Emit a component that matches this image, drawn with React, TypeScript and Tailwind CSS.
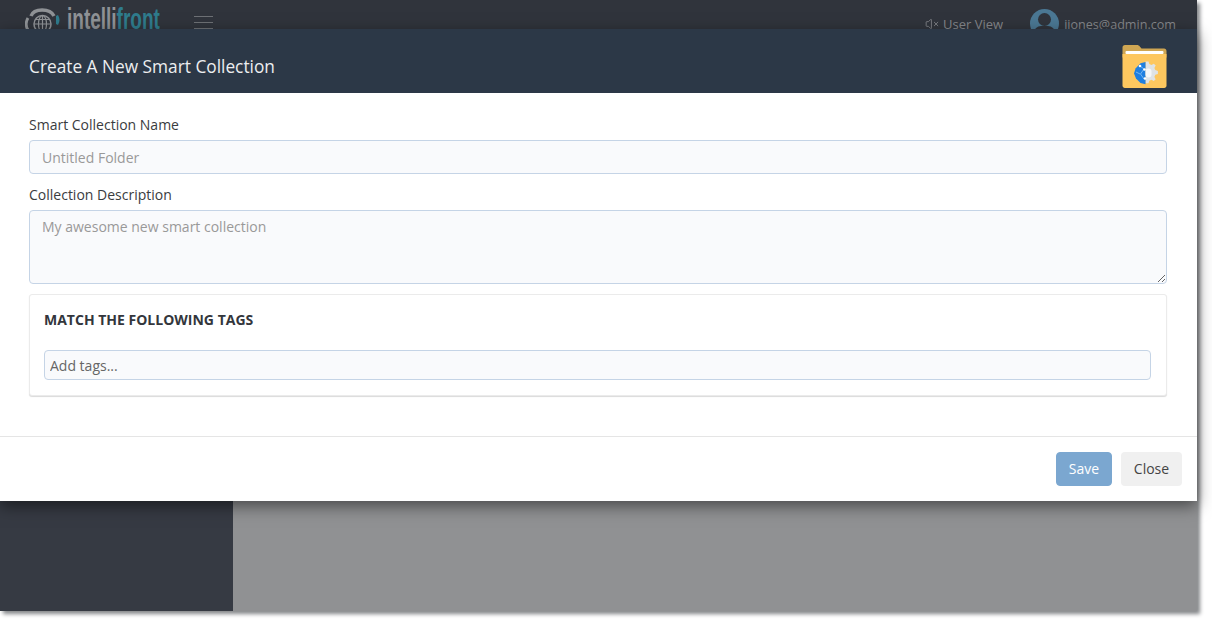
import { VolumeX } from 'lucide-react';

function FolderIcon() {
  return (
    <svg width="45" height="43" viewBox="1 0.500 44 43" aria-hidden="true">
      <path d="M1 3C1 1.500 2 .5 3.500 .5h12c1.200 0 2 .5 2.800 1.500L20 4h22.500C44 4 45 5 45 6.500V13H1z" fill="#cfa653" />
      <path d="M1 9.500h44V41c0 1.400-1 2.400-2.400 2.400H3.400C2 43.400 1 42.400 1 41z" fill="#fdc75f" />
      <rect x="4" y="6.500" width="38" height="3" rx="1" fill="#fff" />
      <path
        d="M24 17h3l.8 2.600 2.200.9 2.300-1.300 1.900 1.900-1.300 2.300.9 2.200 2.600.8v3l-2.600.8-.9 2.200 1.300 2.300-1.900 1.900-2.300-1.300-2.200.9-.8 2.600h-3z"
        fill="#dfe3e6"
      />
      <path d="M24 17.500l-5 1.200-5 5.300-1.500 5 2 5 4.500 4.500 5 1.300z" fill="#1f7fe0" />
      <path d="M18.500 21.500l4 3-3.500 5 3.500 5M14.500 27.500l4 2" stroke="#8cc4f7" strokeWidth="0.8" fill="none" />
      <circle cx="18.500" cy="21.500" r="1.300" fill="#fff" />
      <circle cx="23" cy="25" r="1.300" fill="#fff" />
      <circle cx="23.500" cy="34" r="1.300" fill="#fff" />
      <rect x="24" y="24" width="6" height="9" rx="3" fill="#f6f7f8" />
    </svg>
  );
}

function LogoMark() {
  return (
    <svg width="37" height="32" viewBox="0 0 37 32" aria-hidden="true" className="shrink-0">
      <path d="M6 12C9 4 25 4 29 12" stroke="#8f9296" strokeWidth="3.500" fill="none" />
      <path d="M3 26c-2.500-4-2-9 0-12" stroke="#8f9296" strokeWidth="3" fill="none" />
      <circle cx="17.500" cy="20" r="8.500" stroke="#8f9296" strokeWidth="1.500" fill="none" />
      <ellipse cx="17.500" cy="20" rx="4" ry="8.500" stroke="#8f9296" strokeWidth="1.200" fill="none" />
      <path d="M9 20h17M10.500 15.500h14M17.500 11.500v17" stroke="#8f9296" strokeWidth="1.200" />
      <path d="M33 11c2 3 2 7 0 10l-2-1v-8z" fill="#2f7c8d" />
    </svg>
  );
}

export default function App() {
  return (
    <div className="h-[626px] w-[1212px] overflow-hidden bg-white font-['Open_Sans',sans-serif] text-sm text-[#3a3c40]">
      <div className="relative flex h-[611px] w-[1197px] flex-col bg-[#909193] shadow-[3px_3px_4px_#85878a]">
        <header className="flex h-[29px] shrink-0 items-start justify-between overflow-hidden bg-[#30343c] pl-[25px] pr-[21px] pt-[4px]">
          <div className="flex items-start">
            <LogoMark />
            <div className="ml-[5px] mt-[-5px] w-[93px]">
              <span className="inline-block origin-left scale-x-[0.655] whitespace-nowrap font-['Liberation_Sans',sans-serif] text-[29px] font-bold text-[#8f9296]">
                intelli<span className="text-[#2f7c8d]">front</span>
              </span>
            </div>
            <div className="ml-[34px] mt-[12px] flex w-[19px] flex-col gap-[5px]">
              <span className="h-px bg-[#6d7075]" />
              <span className="h-px bg-[#6d7075]" />
              <span className="h-px bg-[#6d7075]" />
            </div>
          </div>
          <div className="flex items-start text-[13px] text-[#85878b]">
            <VolumeX size={14} strokeWidth={1.500} className="mt-[13px]" />
            <span className="ml-[4px] mt-[11px]">User View</span>
            <div className="relative ml-[27px] mt-[5px] h-[29px] w-[29px] overflow-hidden rounded-full bg-[#4b7894]">
              <span className="absolute left-[8px] top-[4px] h-[13px] w-[13px] rounded-full bg-[#30343c]" />
              <span className="absolute left-[4px] top-[17px] h-[14px] w-[21px] rounded-full bg-[#30343c]" />
            </div>
            <span className="ml-[5px] mt-[11px] text-[12.6px] leading-[19.5px]">jjones@admin.com</span>
          </div>
        </header>

        <div className="flex min-h-0 flex-1">
          <aside className="w-[233px] shrink-0 bg-[#363a43]" />
          <main className="flex-1 bg-[#909193]" />
        </div>

        <div className="absolute left-0 top-[29px] flex h-[472px] w-full flex-col bg-white shadow-[0_5px_15px_rgba(0,0,0,0.5)]">
          <div className="flex h-[64px] shrink-0 items-center justify-between bg-[#2c3847] pl-[29px] pr-[30px]">
            <h2 className="mt-[12px] text-[17.3px] font-normal leading-[24px] text-[#eceef0]">Create A New Smart Collection</h2>
            <div className="mt-[11px] h-[44px]">
              <FolderIcon />
            </div>
          </div>

          <div className="flex-1 pl-[29px] pr-[30px] pt-[22px]">
            <label className="block leading-[20px]">Smart Collection Name</label>
            <input
              placeholder="Untitled Folder"
              className="mt-[5px] block h-[34px] w-full rounded border border-[#c5d4e6] bg-[#f9fafc] px-3 outline-none placeholder:text-[#999]"
            />
            <label className="mt-[11px] block leading-[20px]">Collection Description</label>
            <textarea
              placeholder="My awesome new smart collection"
              className="mt-[5px] block h-[74px] w-full rounded border border-[#c5d4e6] bg-[#f9fafc] px-3 py-[6px] leading-[20px] outline-none placeholder:text-[#999]"
            />
            <section className="mt-[10px] h-[102px] rounded-[3px] border border-[#ebebeb] bg-white pl-[14px] pr-[15px] shadow-[0_1px_1px_rgba(0,0,0,0.15)]">
              <h3 className="mt-[15px] font-bold uppercase leading-[20px] text-[#33363c]">Match the following tags</h3>
              <input
                placeholder="Add tags..."
                className="mt-[20px] block h-[30px] w-full rounded border border-[#c5d4e6] bg-[#f9fafc] px-[5px] outline-none placeholder:text-[#666]"
              />
            </section>
          </div>

          <footer className="flex h-[65px] shrink-0 items-start justify-end gap-[9px] border-t border-[#e5e5e5] pr-[15px] pt-[15px]">
            <button
              type="button"
              className="h-[34px] w-[56px] rounded border border-[#7ba7d0] bg-[#7ba7d0] text-white"
            >
              Save
            </button>
            <button type="button" className="h-[34px] w-[61px] rounded bg-[#f0f0f0] text-[#444]">
              Close
            </button>
          </footer>
        </div>
      </div>
    </div>
  );
}
